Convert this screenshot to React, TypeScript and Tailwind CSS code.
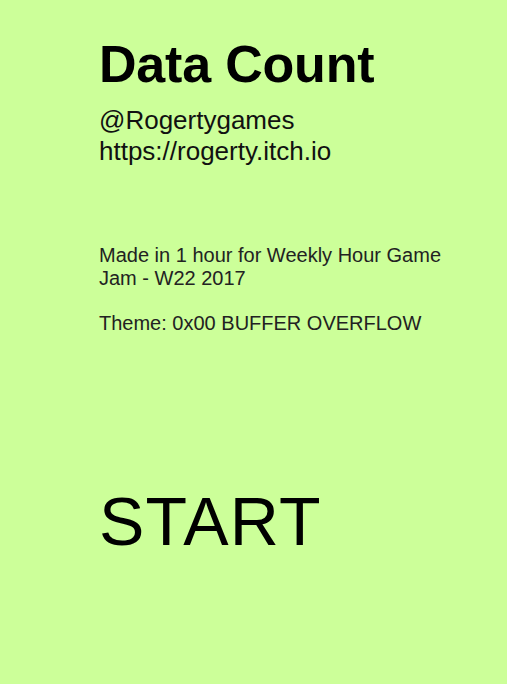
export default function App() {
  return (
    <div className="min-h-screen w-full bg-[#ccff99] font-['Liberation_Sans',Arial,sans-serif]">
      <div className="flex w-[462px] flex-col pl-[99px] pt-[39px]">
        <h1 className="text-[52px] leading-[50px] font-bold tracking-[-0.2px] text-black">Data Count</h1>
        <div className="mt-[16px] text-[26px] leading-[31px] text-[#111]">
          <p>@Rogertygames</p>
          <p>https://rogerty.itch.io</p>
        </div>
        <p className="mt-[77px] text-[20px] leading-[23px] text-[#222]">
          Made in 1 hour for Weekly Hour Game Jam - W22 2017
        </p>
        <p className="mt-[22px] text-[20px] leading-[23px] text-[#222]">
          Theme: 0x00 BUFFER OVERFLOW
        </p>
        <button className="mt-[152px] self-start text-left text-[68px] leading-[68px] tracking-[1.2px] text-black">
          START
        </button>
      </div>
    </div>
  );
}
